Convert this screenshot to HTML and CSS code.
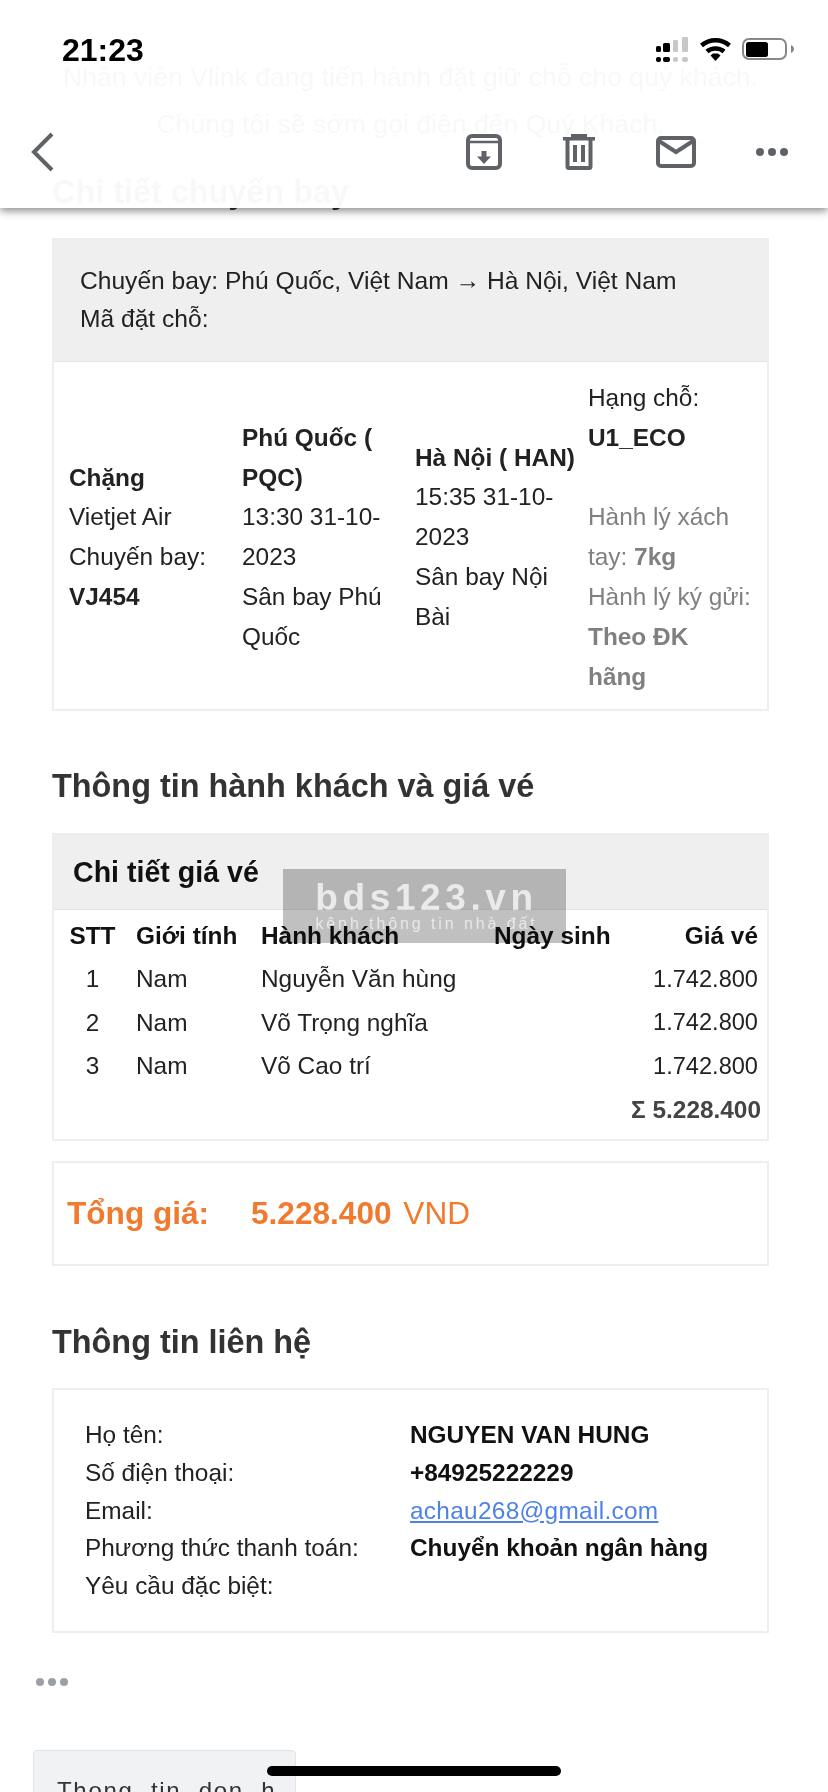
FILE: index.html
```html
<!DOCTYPE html>
<html lang="vi">
<head>
  <meta charset="UTF-8" />
  <meta name="viewport" content="width=device-width, initial-scale=1.0" />
  <title>Chi tiết chuyến bay</title>
  <link rel="stylesheet" href="styles.css">
</head>
<body>
  <header class="topbar">
    <div class="status">
      <span class="time">21:23</span>
      <svg class="signal" width="34" height="26" viewBox="0 0 34 26">
        <rect class="on" x="0" y="9" width="5" height="6" rx="1.5" />
        <rect class="on" x="7" y="6" width="7" height="9" rx="1.5" />
        <rect class="off" x="17" y="3" width="5" height="12" rx="1" />
        <rect class="off" x="26" y="0" width="6" height="15" rx="1" />
        <rect class="on" x="0" y="20" width="5" height="5" rx="2" />
        <rect class="on" x="7" y="20" width="7" height="5" rx="2" />
        <rect class="off" x="17" y="20" width="5" height="5" rx="2" />
        <rect class="off" x="26" y="20" width="6" height="5" rx="2" />
      </svg>
      <svg class="wifi" width="31" height="23" viewBox="0 0 31 23">
        <path d="M1.5 7.500C9.500 0.500 21.500 0.500 29.500 7.500" />
        <path d="M7 13.500C11.500 9.500 19.500 9.500 24 13.500" />
        <polygon points="15.500,23 10.500,17.500 13,15.500 18,15.500 20.500,17.500" />
      </svg>
      <svg class="battery" width="52" height="22" viewBox="0 0 52 22">
        <rect class="shell" x="1" y="1" width="43" height="20" rx="6" />
        <rect x="4" y="4" width="22" height="15" rx="2.500" />
        <path class="nub" d="M49 7c2 1 3 2.500 3 4s-1 3-3 4z" />
      </svg>
    </div>
    <div class="toolbar">
      <svg class="back" width="24" height="40" viewBox="0 0 24 40">
        <path d="M21 2L3 20l18 18" />
      </svg>
      <div class="actions">
        <svg width="36" height="36" viewBox="0 0 36 36">
          <rect class="line" x="2" y="2" width="32" height="32" rx="4" />
          <path class="thin" d="M3 8h30" />
          <path class="solid" d="M15.500 17h5v5.500h4.500L18 30l-7-7.500h4.500z" />
        </svg>
        <svg width="34" height="36" viewBox="0 0 34 36">
          <rect class="solid" x="9" y="0" width="16" height="4" />
          <rect class="solid" x="1" y="3" width="32" height="3.500" />
          <path class="line" d="M5.500 6v26.500q0 1.500 1.500 1.500h20q1.500 0 1.500-1.500V6" />
          <rect class="solid" x="11" y="11" width="4" height="17" />
          <rect class="solid" x="19" y="11" width="4" height="17" />
        </svg>
        <svg width="40" height="32" viewBox="0 0 40 32">
          <rect class="line" x="2" y="2" width="36" height="28" rx="3" />
          <path class="line" d="M3 5l17 11L37 5" />
        </svg>
        <svg width="32" height="8" viewBox="0 0 32 8">
          <circle class="solid" cx="4" cy="4" r="4" />
          <circle class="solid" cx="16" cy="4" r="4" />
          <circle class="solid" cx="28" cy="4" r="4" />
        </svg>
      </div>
    </div>
  </header>

  <main class="mail">
    <p class="notice">Nhân viên Vlink đang tiến hành đặt giữ chỗ cho quý khách.</p>
    <p class="notice">Chúng tôi sẽ sớm gọi điện đến Quý Khách.</p>

    <h2 class="first">Chi tiết chuyến bay</h2>
    <section class="box">
      <div class="box-head route">
        Chuyến bay: Phú Quốc, Việt Nam → Hà Nội, Việt Nam<br />
        Mã đặt chỗ:
      </div>
      <table class="legs">
        <tr>
          <td><b>Chặng</b><br />Vietjet Air<br />Chuyến bay:<br /><b>VJ454</b></td>
          <td><b>Phú Quốc ( PQC)</b><br />13:30 31-10-2023<br />Sân bay Phú Quốc</td>
          <td><b>Hà Nội ( HAN)</b><br />15:35 31-10-2023<br />Sân bay Nội Bài</td>
          <td class="seat">
            Hạng chỗ:<br /><b>U1_ECO</b><br /><br />
            <span class="muted">Hành lý xách<br />tay: <b>7kg</b><br />Hành lý ký gửi:<br /><b>Theo ĐK<br />hãng</b></span>
          </td>
        </tr>
      </table>
    </section>

    <h2>Thông tin hành khách và giá vé</h2>
    <section class="box fares-box">
      <div class="box-head fares-title">Chi tiết giá vé</div>
      <table class="fares">
        <tr>
          <th class="no">STT</th>
          <th class="sex">Giới tính</th>
          <th class="name">Hành khách</th>
          <th class="dob">Ngày sinh</th>
          <th class="price">Giá vé</th>
        </tr>
        <tr>
          <td class="no">1</td><td>Nam</td><td>Nguyễn Văn hùng</td><td></td><td class="price">1.742.800</td>
        </tr>
        <tr>
          <td class="no">2</td><td>Nam</td><td>Võ Trọng nghĩa</td><td></td><td class="price">1.742.800</td>
        </tr>
        <tr>
          <td class="no">3</td><td>Nam</td><td>Võ Cao trí</td><td></td><td class="price">1.742.800</td>
        </tr>
        <tr>
          <td colspan="5" class="sum">Σ 5.228.400</td>
        </tr>
      </table>
      <div class="watermark">
        <div class="wm-name">bds123.vn</div>
        <div class="wm-sub">kênh thông tin nhà đất</div>
      </div>
    </section>

    <section class="box total">
      <b class="total-label">Tổng giá:</b>
      <span class="total-sum"><b>5.228.400</b> VND</span>
    </section>

    <h2 class="contact-title">Thông tin liên hệ</h2>
    <section class="box contact">
      <span>Họ tên:</span><b>NGUYEN VAN HUNG</b>
      <span>Số điện thoại:</span><b>+84925222229</b>
      <span>Email:</span><a href="mailto:achau268@gmail.com">achau268@gmail.com</a>
      <span>Phương thức thanh toán:</span><b>Chuyển khoản ngân hàng</b>
      <span>Yêu cầu đặc biệt:</span><b></b>
    </section>
  </main>

  <div class="trail">
    <div class="more"><i></i><i></i><i></i></div>
    <div class="quote">Thong tin don h</div>
  </div>

  <div class="home-bar"></div>
</body>
</html>
```

FILE: styles.css
```css
* {
  box-sizing: border-box;
  margin: 0;
  padding: 0;
}

html, body {
  height: 1792px;
  overflow: hidden;
}

body {
  position: relative;
  font-family: 'Liberation Sans', Arial, sans-serif;
  font-size: 24.4px;
  color: #222;
  background: #fff;
}

.topbar {
  position: absolute;
  top: 0;
  left: 0;
  right: 0;
  height: 208px;
  background: rgba(255, 255, 255, 0.97);
  box-shadow: 0 3px 8px rgba(0, 0, 0, 0.45);
  z-index: 5;
}

.status {
  display: flex;
  align-items: flex-start;
  height: 126px;
  padding: 37px 34px 0 62px;
}

.time {
  font-size: 32px;
  font-weight: bold;
  line-height: 26px;
  color: #000;
  margin-right: auto;
}

.signal {
  margin-right: 10px;
}

.signal .on { fill: #000; }
.signal .off { fill: #c8c8c8; }

.wifi {
  margin: 1px 11px 0 0;
}

.wifi path {
  fill: none;
  stroke: #000;
  stroke-width: 4.5;
}

.battery {
  margin-top: 1px;
}

.battery .shell {
  fill: none;
  stroke: #888;
  stroke-width: 2;
}

.battery .nub { fill: #888; }

.toolbar {
  display: flex;
  justify-content: space-between;
  align-items: center;
  height: 52px;
  padding: 0 40px 0 31px;
}

.back path {
  fill: none;
  stroke: #5f6368;
  stroke-width: 4;
}

.actions {
  display: flex;
  align-items: center;
  gap: 60px;
}

.line {
  fill: none;
  stroke: #5f6368;
  stroke-width: 4;
}

.thin {
  fill: none;
  stroke: #5f6368;
  stroke-width: 2.5;
}

.solid { fill: #5f6368; }

/* mail body */
.mail {
  padding: 54px 59px 0 52px;
}

.notice {
  font-size: 26.6px;
  line-height: 47px;
  text-align: center;
  white-space: nowrap;
}

h2 {
  font-size: 32.4px;
  line-height: 36px;
  color: #333;
  margin: 57px 0 29px;
}

h2.first {
  margin: 26px 0 28px;
}

h2.contact-title {
  margin: 58px 0 28px;
}

.box {
  border: 2px solid #eee;
}

.box-head {
  background: #efefef;
  border-bottom: 1px solid #e2e2e2;
}

.route {
  height: 122px;
  padding: 22px 26px 0;
  font-size: 24.6px;
  line-height: 38px;
}

.legs {
  width: calc(100% - 9px);
  table-layout: fixed;
  border-collapse: collapse;
  margin: 16px 0 13px 9px;
  line-height: 39.8px;
}

.legs td {
  width: 173px;
  padding: 0 6px;
  vertical-align: middle;
}

.legs td.seat {
  width: auto;
  padding-right: 0;
}

.muted { color: #808080; }

.fares-box {
  position: relative;
  height: 308px;
}

.fares-title {
  height: 75px;
  padding-left: 19px;
  font-size: 28.6px;
  font-weight: bold;
  line-height: 75px;
  color: #111;
}

.fares {
  width: calc(100% - 13px);
  margin: 4px 6px 0 7px;
  table-layout: fixed;
  border-collapse: collapse;
}

.fares th, .fares td {
  height: 43.4px;
  padding: 0;
  text-align: left;
  white-space: nowrap;
}

.fares th {
  color: #111;
}

.fares .no {
  width: 75px;
  padding-right: 12px;
  text-align: center;
}

.fares .sex { width: 125px; }
.fares .name { width: 233px; }
.fares .dob { width: 126px; }

.fares .price {
  padding-right: 3px;
  text-align: right;
}

.fares td.price {
  font-size: 23.6px;
}

.fares .sum {
  text-align: right;
  font-weight: bold;
  color: #444;
}

.watermark {
  position: absolute;
  left: 229px;
  top: 34px;
  width: 283px;
  height: 74px;
  padding: 10px 0 0 4px;
  background: #c0c0c0;
  mix-blend-mode: multiply;
  text-align: center;
  color: #fafafa;
}

.wm-name {
  font-size: 37px;
  font-weight: bold;
  line-height: 37px;
  letter-spacing: 4.6px;
}

.wm-sub {
  font-size: 16px;
  line-height: 16px;
  letter-spacing: 2.9px;
  color: #e8e8e8;
  white-space: nowrap;
}

.total {
  display: flex;
  align-items: center;
  height: 105px;
  margin-top: 20px;
  padding-left: 13px;
  font-size: 31.6px;
  color: #f07a2e;
}

.total-label {
  width: 184px;
}

.total-sum {
  word-spacing: 3px;
}

.contact {
  display: grid;
  grid-template-columns: 325px 1fr;
  grid-auto-rows: 37.7px;
  align-items: center;
  height: 245px;
  padding: 26px 0 0 31px;
  color: #222;
}

.contact b {
  color: #111;
}

.contact a {
  color: #4f81ea;
  letter-spacing: 0.3px;
}

/* quoted text at the end */
.trail {
  padding-left: 33px;
}

.more {
  display: flex;
  gap: 4px;
  margin: 45px 0 64px 3px;
}

.more i {
  width: 8px;
  height: 8px;
  border-radius: 50%;
  background: #9aa0a6;
}

.quote {
  width: 263px;
  height: 60px;
  padding: 26px 0 0 23px;
  background: #f1f2f4;
  border: 1px solid #e2e3e6;
  border-radius: 4px 4px 0 0;
  font-size: 24px;
  word-spacing: 9px;
  letter-spacing: 1.7px;
  color: #333;
  white-space: nowrap;
  overflow: hidden;
}

.home-bar {
  position: absolute;
  left: 267px;
  top: 1766px;
  width: 294px;
  height: 10px;
  border-radius: 5px;
  background: #000;
  z-index: 6;
}
```
